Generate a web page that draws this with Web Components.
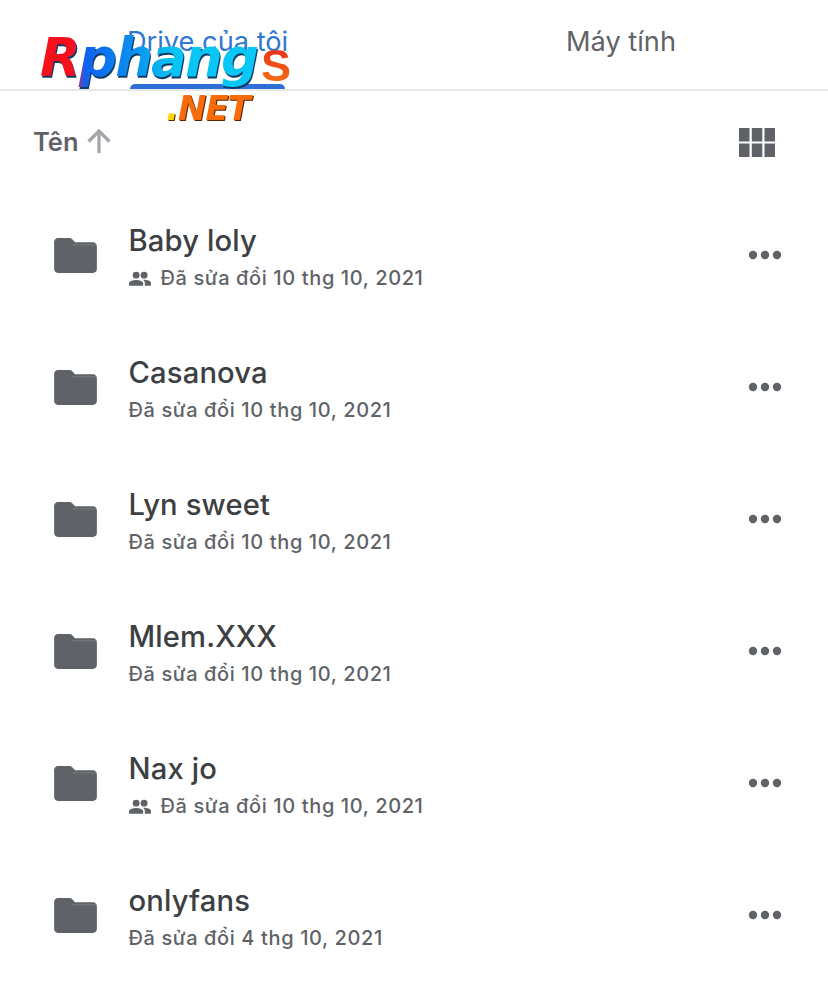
<!DOCTYPE html>
<html lang="vi">
<head>
<meta charset="utf-8">
<title>Drive</title>
<style>
  html, body { margin: 0; background: #fff; }
  body { width: 828px; height: 1007px; overflow: hidden; font-family: Inter, "Noto Sans", sans-serif; }
</style>
</head>
<body>
<drive-app>
  <drive-tabs></drive-tabs>
  <sort-bar></sort-bar>
  <folder-row name="Baby loly" shared>Đã sửa đổi 10 thg 10, 2021</folder-row>
  <folder-row name="Casanova">Đã sửa đổi 10 thg 10, 2021</folder-row>
  <folder-row name="Lyn sweet">Đã sửa đổi 10 thg 10, 2021</folder-row>
  <folder-row name="Mlem.XXX">Đã sửa đổi 10 thg 10, 2021</folder-row>
  <folder-row name="Nax jo" shared>Đã sửa đổi 10 thg 10, 2021</folder-row>
  <folder-row name="onlyfans">Đã sửa đổi 4 thg 10, 2021</folder-row>
  <site-logo></site-logo>
</drive-app>

<script>
class DriveApp extends HTMLElement {
    constructor() {
        super();
        this.attachShadow({ mode: 'open' });
        this.shadowRoot.innerHTML = `
        <style>
            :host { display: block; position: relative; width: 828px; height: 1007px; background: #fff; }
        </style>
        <slot></slot>`;
    }
}

class DriveTabs extends HTMLElement {
    constructor() {
        super();
        this.attachShadow({ mode: 'open' });
        this.shadowRoot.innerHTML = `
        <style>
            :host {
                display: grid;
                grid-template-columns: 414px 414px;
                height: 89px;
                border-bottom: 2px solid #e6e7e9;
                box-sizing: content-box;
            }
            .tab {
                display: flex;
                justify-content: center;
                padding-top: 25px;
                font-size: 27.2px;
                line-height: 33px;
                color: #5f6368;
                position: relative;
                box-sizing: border-box;
            }
            .active { color: #2f78d2; justify-content: flex-start; padding-left: 127px; }
            .active::after {
                content: "";
                position: absolute;
                left: 130px;
                width: 155px;
                bottom: 0;
                height: 5px;
                background: #2f6fd6;
                border-radius: 5px 5px 0 0;
            }
        </style>
        <div class="tab active">Drive của tôi</div>
        <div class="tab">Máy tính</div>`;
    }
}

class SortBar extends HTMLElement {
    constructor() {
        super();
        this.attachShadow({ mode: 'open' });
        this.shadowRoot.innerHTML = `
        <style>
            :host {
                display: flex;
                align-items: center;
                justify-content: space-between;
                height: 98px;
                padding: 4px 53px 0 33px;
                box-sizing: border-box;
                color: #5f6368;
            }
            .label { display: flex; align-items: center; gap: 7px; margin-top: -2px; font-size: 25.5px; font-weight: 600; }
            svg { display: block; }
        </style>
        <div class="label">Tên
            <svg width="26" height="26" viewBox="0 0 26 26" fill="none" stroke="#a2a5aa" stroke-width="3.2">
                <path d="M13 25V3M2.500 13.500L13 3l10.500 10.500"/>
            </svg>
        </div>
        <svg width="36" height="29" viewBox="0 0 36 29" fill="#5f6368">
            <rect x="0" y="0" width="10.500" height="13.500"/><rect x="12.800" y="0" width="10.500" height="13.500"/><rect x="25.500" y="0" width="10.500" height="13.500"/>
            <rect x="0" y="15.500" width="10.500" height="13.500"/><rect x="12.800" y="15.500" width="10.500" height="13.500"/><rect x="25.500" y="15.500" width="10.500" height="13.500"/>
        </svg>`;
    }
}

class FolderRow extends HTMLElement {
    constructor() {
        super();
        this.attachShadow({ mode: 'open' });
    }

    connectedCallback() {
        const shared = this.hasAttribute('shared');
        this.shadowRoot.innerHTML = `
        <style>
            :host {
                display: flex;
                align-items: center;
                height: 132px;
                padding: 0 46.500px 0 54px;
                box-sizing: border-box;
            }
            .folder { flex: none; width: 43px; height: 35px; margin: 1px 32px 0 0; display: block; }
            .text { flex: 1; min-width: 0; margin-top: 4px; margin-left: -0.500px; }
            .name { font-size: 29.200px; line-height: 36px; font-weight: 500; letter-spacing: .15px; color: #3c4043; margin-top: -1px; }
            .sub {
                display: flex;
                align-items: center;
                gap: 10px;
                margin-top: 7px;
                font-size: 20px;
                line-height: 24px;
                font-weight: 500;
                letter-spacing: 0.620px;
                color: #5f6368;
            }
            .dots { flex: none; display: block; margin-top: -1px; }
        </style>
        <svg class="folder" viewBox="0 0 44 36" fill="#5f6368">
            <path d="M4 0h11.500c1.300 0 2.400.5 3.200 1.400L21.500 4.400H40c2.200 0 4 1.800 4 4V32c0 2.200-1.800 4-4 4H4c-2.200 0-4-1.800-4-4V4C0 1.800 1.800 0 4 0z"/>
            <path d="M19 7h25" stroke="#fff" stroke-width=".8" opacity=".2"/>
        </svg>
        <div class="text">
            <div class="name">${this.getAttribute('name')}</div>
            <div class="sub">
                ${shared ? `<svg width="22" height="15" viewBox="0 0 23 15" fill="#5f6368"><circle cx="7.500" cy="4" r="3.600"/><circle cx="15.800" cy="4" r="3.600"/><path d="M0 15v-2.500C0 10 4.600 9 7.500 9s7.300 1 7.300 3.500V15z"/><path d="M16.600 15v-2.800c0-1.300-.7-2.400-1.800-3.200.5-.1 1-.1 1.300-.1 2.700 0 6.900 1.100 6.900 3.500V15z"/></svg>` : ''}
                <span><slot></slot></span>
            </div>
        </div>
        <svg class="dots" width="34" height="10" viewBox="0 0 34 10" fill="#5f6368">
            <circle cx="5" cy="5" r="4.200"/><circle cx="17" cy="5" r="4.200"/><circle cx="29" cy="5" r="4.200"/>
        </svg>`;
    }
}

// watermark sitting over the tab bar
class SiteLogo extends HTMLElement {
    constructor() {
        super();
        this.attachShadow({ mode: 'open' });
        this.shadowRoot.innerHTML = `
        <style>
            :host {
                position: absolute;
                left: 40px;
                top: 26px;
                width: 250px;
                height: 100px;
                font-family: "DejaVu Sans", sans-serif;
                font-weight: 700;
                font-style: italic;
                white-space: nowrap;
            }
            .main {
                position: absolute;
                left: 0;
                top: 0;
                font-size: 53px;
                line-height: 64px;
                letter-spacing: -1.800px;
                background: linear-gradient(90deg, #f5101c 0, #f5101c 15%, #8a3a9a 18%, #0d62f0 21%, #0b8ef0 42%, #08c4f4 62%, #08c8f8 100%);
                -webkit-background-clip: text;
                background-clip: text;
                color: transparent;
                filter: drop-shadow(1px 2px 0 #123a66);
            }
            .s {
                position: absolute;
                left: 221px;
                top: 16px;
                font-family: "Liberation Sans", sans-serif;
                font-style: normal;
                font-size: 45px;
                line-height: 48px;
                background: linear-gradient(180deg, #e8261c, #f57a10);
                -webkit-background-clip: text;
                background-clip: text;
                color: transparent;
            }
            .net {
                position: absolute;
                left: 126px;
                top: 62px;
                font-size: 34px;
                line-height: 40px;
                letter-spacing: -1px;
                color: #f76b08;
                filter: drop-shadow(1px 1px 0 #5a2400);
            }
            .net b { color: #f5d60a; font-weight: 700; }
        </style>
        <div class="main">Rphang</div>
        <div class="s">S</div>
        <div class="net"><b>.</b>NET</div>`;
    }
}

customElements.define('drive-app', DriveApp);
customElements.define('drive-tabs', DriveTabs);
customElements.define('sort-bar', SortBar);
customElements.define('folder-row', FolderRow);
customElements.define('site-logo', SiteLogo);
</script>
</body>
</html>
